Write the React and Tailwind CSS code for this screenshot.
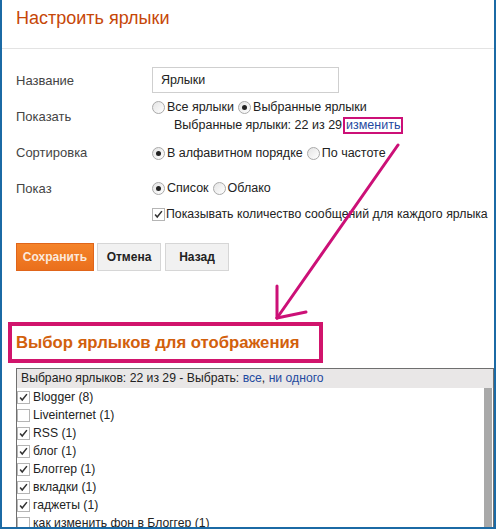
import React from 'react';

const labels = [
    { name: 'Blogger (8)', on: true },
    { name: 'Liveinternet (1)', on: false },
    { name: 'RSS (1)', on: true },
    { name: 'блог (1)', on: true },
    { name: 'Блоггер (1)', on: true },
    { name: 'вкладки (1)', on: true },
    { name: 'гаджеты (1)', on: true },
    { name: 'как изменить фон в Блоггер (1)', on: false },
];

function Radio({ checked }) {
    return (
        <span className="inline-flex w-[13px] h-[13px] rounded-full border border-[#a9a9a9] bg-gradient-to-br from-[#e4e4e4] to-white items-center justify-center mr-[2px] shrink-0">
            {checked && <span className="w-[5px] h-[5px] rounded-full bg-[#222]" />}
        </span>
    );
}

function Check({ checked }) {
    return (
        <span className="inline-flex w-[13px] h-[13px] border border-[#b5b5b5] bg-white items-center justify-center shrink-0">
            {checked && (
                <svg viewBox="0 0 13 13" className="w-[13px] h-[13px]">
                    <path d="M2.5 6.5 L5 9.5 L10.5 2.5" fill="none" stroke="#333" strokeWidth="1.8" />
                </svg>
            )}
        </span>
    );
}

export default function App() {
    return (
        <div className="relative w-[499px] h-[530px] bg-white overflow-hidden font-['Liberation_Sans',Arial,sans-serif] text-[12.5px] text-[#222] whitespace-nowrap">
            <div className="w-[496px] h-[529px] border-l-2 border-r-2 border-b-2 border-[#1b6aa5] overflow-hidden">
                {/* Заголовок */}
                <div className="h-[49px] border-b border-[#e3e3e3] pl-[14px] pt-[6px]">
                    <h1 className="text-[18px] leading-[24px] text-[#c64708]">Настроить ярлыки</h1>
                </div>

                {/* Форма */}
                <div className="pl-[14px]">
                    <div className="flex items-center mt-[18px]">
                        <div className="w-[136px] text-[#444] text-[13px] pt-[2px]">Название</div>
                        <div className="w-[187px] h-[26px] border border-[#cfcfcf] flex items-center pl-[8px]">Ярлыки</div>
                    </div>

                    <div className="flex items-center mt-[5px]">
                        <div className="w-[136px] text-[#444] text-[13px] pt-[2px]">Показать</div>
                        <div>
                            <div className="flex items-center h-[18px] pt-[1px]">
                                <Radio />
                                <span className="mr-[4px]">Все ярлыки</span>
                                <Radio checked />
                                <span>Выбранные ярлыки</span>
                            </div>
                            <div className="flex items-center h-[18px] pl-[22px]">
                                <span>Выбранные ярлыки: 22 из 29</span>
                                <span className="border-2 border-[#cc1077] px-[1px] h-[17px] leading-[12px] text-[#1f4aa0] ml-[1px]">изменить</span>
                            </div>
                        </div>
                    </div>

                    <div className="flex items-center mt-[10px] h-[18px]">
                        <div className="w-[136px] text-[#444] text-[13px]">Сортировка</div>
                        <Radio checked />
                        <span className="mr-[4px]">В алфавитном порядке</span>
                        <Radio />
                        <span>По частоте</span>
                    </div>

                    <div className="flex items-center mt-[17px] h-[18px] pt-[1px]">
                        <div className="w-[136px] text-[#444] text-[13px]">Показ</div>
                        <Radio checked />
                        <span className="mr-[4px]">Список</span>
                        <Radio />
                        <span>Облако</span>
                    </div>

                    <div className="flex items-center mt-[8px] h-[18px] pl-[136px] pt-[1px]">
                        <Check checked />
                        <span className="ml-[1px] text-[12.3px]">Показывать количество сообщений для каждого ярлыка</span>
                    </div>

                    {/* Кнопки */}
                    <div className="flex mt-[20px] gap-[3px]">
                        <button className="w-[78px] h-[28px] bg-gradient-to-b from-[#f5842a] to-[#ea6f1c] border border-[#e0651a] text-[#fbe9dc] text-[12px] font-bold">Сохранить</button>
                        <button className="w-[64px] h-[28px] bg-[#f1f1f1] border border-[#d6d6d6] text-[#222] text-[12px] font-bold">Отмена</button>
                        <button className="w-[64px] h-[28px] bg-[#f1f1f1] border border-[#d6d6d6] text-[#222] text-[12px] font-bold ml-[1px]">Назад</button>
                    </div>
                </div>

                {/* Выбор ярлыков */}
                <div className="ml-[6px] mt-[51px] w-[315px] h-[41px] border-4 border-[#d1146c] flex items-center pl-[4px]">
                    <h2 className="text-[16.7px] font-bold text-[#d2600c]">Выбор ярлыков для отображения</h2>
                </div>

                <div className="ml-[14px] mt-[5px] w-[478px] border-t border-l border-r border-[#6f6f6f] text-[12.2px]">
                    <div className="h-[19px] bg-[#e9e7e7] flex items-center pl-[4px]">
                        Выбрано ярлыков: 22 из 29 - Выбрать:&nbsp;<span className="text-[#1f4aa0]">все</span>,&nbsp;<span className="text-[#1f4aa0]">ни одного</span>
                    </div>
                    <div className="flex">
                        <div className="flex-1">
                            {labels.map((l) => (
                                <div key={l.name} className="h-[18px] flex items-center">
                                    <Check checked={l.on} />
                                    <span className="ml-[3px]">{l.name}</span>
                                </div>
                            ))}
                        </div>
                        <div className="w-[8px] mr-[1px] bg-[#a9a9a9]" />
                    </div>
                </div>
            </div>

            {/* Стрелка */}
            <svg className="absolute left-0 top-0 w-[499px] h-[530px] pointer-events-none" viewBox="0 0 499 530">
                <g stroke="#cc1077" strokeWidth="3" strokeLinecap="round" fill="none">
                    <line x1="398" y1="145" x2="277" y2="318" />
                    <line x1="277" y1="286" x2="277" y2="318" />
                    <line x1="277" y1="318" x2="306" y2="312" />
                </g>
            </svg>
        </div>
    );
}
